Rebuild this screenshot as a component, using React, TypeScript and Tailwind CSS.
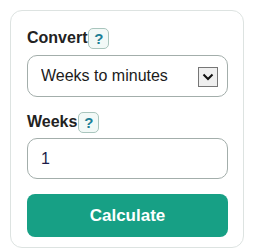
import { useState } from 'react';

function HelpBadge() {
  return (
    <span className="ml-px inline-flex h-[21px] w-[21px] shrink-0 items-center justify-center rounded-[5px] border border-[#a9c5bd] bg-[#f2f9f7] text-[15px] font-bold leading-none text-[#1d7f96]">
      ?
    </span>
  );
}

export default function App() {
  const [mode, setMode] = useState('w2m');
  const [weeks, setWeeks] = useState('1');

  return (
    <div className="h-[248px] w-[255px] overflow-hidden bg-white pl-[10px] pt-[10px] font-['Liberation_Sans',Arial,sans-serif]">
      <div className="h-[238px] w-[234px] rounded-[12px] border border-[#dde3e1] px-[16px] pt-[16px]">
        <div className="flex h-[22px] items-center">
          <span className="text-[16px] font-bold text-[#222]">Convert</span>
          <HelpBadge />
        </div>
        <div className="relative mt-[6px] h-[42px] w-[201px]">
          <select
            value={mode}
            onChange={e => setMode(e.target.value)}
            className="h-full w-full appearance-none rounded-[10px] border border-[#a3aeab] bg-white pl-[13px] text-[16px] text-[#1b1b1b] outline-none"
          >
            <option value="w2m">Weeks to minutes</option>
            <option value="m2w">Minutes to weeks</option>
          </select>
          <div className="pointer-events-none absolute right-[10px] top-[12px] flex h-[20px] w-[20px] items-center justify-center border border-[#767676] bg-[#efefef]">
            <svg width="12" height="8" viewBox="0 0 12 8">
              <path d="M1.5 1.5 L6 6 L10.5 1.5" fill="none" stroke="#111" strokeWidth="2" />
            </svg>
          </div>
        </div>
        <div className="mt-[15px] flex h-[20px] items-center">
          <span className="text-[16px] font-bold text-[#222]">Weeks</span>
          <HelpBadge />
        </div>
        <input
          value={weeks}
          onChange={e => setWeeks(e.target.value)}
          className="mt-[6px] block h-[41px] w-[201px] rounded-[10px] border border-[#a3aeab] bg-white pl-[13px] text-[16px] text-[#1c1c4a] outline-none"
        />
        <button className="mt-[15px] block h-[43px] w-[201px] rounded-[8px] bg-[#17a085] text-[17px] font-bold text-white">
          Calculate
        </button>
      </div>
    </div>
  );
}
